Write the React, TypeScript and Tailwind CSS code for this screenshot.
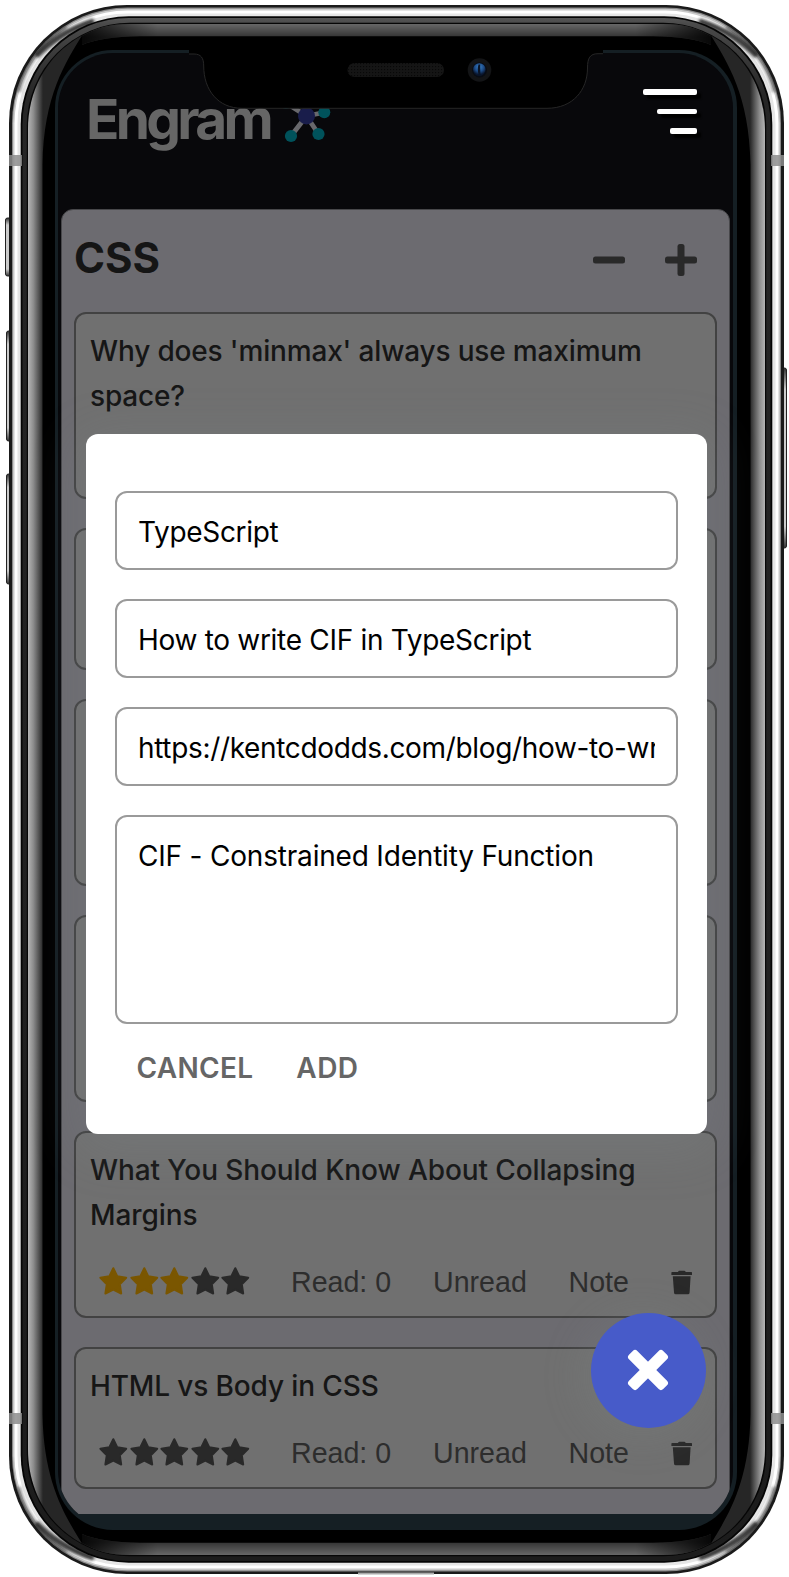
import React from "react";

type Item = { title: string[]; tracking: string; rating: number };

const covered = ["h-[141.7px]", "h-[186.7px]", "h-[186.7px]"];

const items: Item[] = [
  { title: ["What You Should Know About Collapsing", "Margins"], tracking: "tracking-[-0.09px]", rating: 3 },
  { title: ["HTML vs Body in CSS"], tracking: "tracking-[-0.13px]", rating: 0 },
];

const cardClass = "shrink-0 rounded-[12px] border-2 border-[#424242] bg-[#707070] pt-[15px] pl-[14px]";

function Star({ on }: { on: boolean }) {
  return (
    <svg width="30.6" height="30" viewBox="0 0 30.6 30" className={on ? "text-[#7a5600]" : "text-[#292929]"}>
      <path
        d="M15.3 2.2L19.2 10.2L28.2 11.7L21.8 18.2L23.2 27.5L15.3 23.6L7.4 27.5L8.800 18.2L2.4 11.7L11.4 10.2Z"
        fill="currentColor"
        stroke="currentColor"
        strokeWidth="2"
        strokeLinejoin="round"
      />
    </svg>
  );
}

function Trash() {
  return (
    <svg width="22" height="25" viewBox="0 0 22 25" fill="#292929">
      <path d="M7.2 1.600Q7.4 0.7 8.4 0.7H13.2Q14.2 0.7 14.5 1.600L14.6 2H20.4Q21 2 21 2.7V5H0.4V2.7Q0.4 2 1 2H7.1Z" />
      <path d="M1.8 6.2H19.6L18.6 22.4Q18.5 24.3 16.8 24.3H4.8Q3.1 24.3 3 22.4Z" />
    </svg>
  );
}

function CardTitle({ lines, tracking }: { lines: string[]; tracking: string }) {
  return (
    <h2 className={`text-[28px] leading-[45px] font-medium text-[#161616] ${tracking}`}>
      {lines.map((line) => (
        <span key={line} className="block whitespace-nowrap">
          {line}
        </span>
      ))}
    </h2>
  );
}

function Card({ item }: { item: Item }) {
  return (
    <article className={cardClass}>
      <CardTitle lines={item.title} tracking={item.tracking} />
      <div className="flex h-[77.7px] items-center pt-[12px] pl-[8px] font-['Liberation_Sans',Arial,sans-serif] text-[28.6px] whitespace-nowrap text-[#2d2d2d]">
        <div className="mb-[3px] flex w-[193px]">
          {[1, 2, 3, 4, 5].map((n) => (
            <Star key={n} on={n <= item.rating} />
          ))}
        </div>
        <span className="w-[142px]">Read: 0</span>
        <span className="w-[135.5px]">Unread</span>
        <span className="w-[102.5px]">Note</span>
        <Trash />
      </div>
    </article>
  );
}

function SideShine() {
  return (
    <path
      d="M28 130C28 92 45 56 82 35.500C66 62 43.500 95 42.500 165V1414C43.500 1484 66 1517 82 1543.500C45 1523 28 1487 28 1449Z"
      fill="url(#side)"
    />
  );
}

function CornerShade() {
  return (
    <g>
      <path d="M18 92C23 68 38 46 66 26" stroke="#444" strokeOpacity=".5" strokeWidth="6" fill="none" filter="url(#soft)" />
      <path d="M36 56C50 42 66 30 94 21" stroke="#222" strokeOpacity=".85" strokeWidth="6" fill="none" filter="url(#soft)" />
    </g>
  );
}

const shinePath =
  "M82 45Q100 37 140 36.300H653Q693 37 711 45L711 36C696 28 684 24 663 24H130C109 24 97 28 82 36Z";

function Device() {
  return (
    <svg className="absolute inset-0" width="789" height="1577" viewBox="0 0 789 1577" fill="none">
      <defs>
        <linearGradient id="side" x1="28" x2="43" y1="0" y2="0" gradientUnits="userSpaceOnUse">
          <stop offset="0" stopColor="#b4b4b4" />
          <stop offset=".35" stopColor="#8e8e8e" />
          <stop offset="1" stopColor="#262626" />
        </linearGradient>
        <linearGradient id="top" x1="0" x2="0" y1="24" y2="37" gradientUnits="userSpaceOnUse">
          <stop offset="0" stopColor="#676767" />
          <stop offset="1" stopColor="#333" />
        </linearGradient>
        <linearGradient id="fade" x1="82" x2="711" y1="0" y2="0" gradientUnits="userSpaceOnUse">
          <stop offset="0" stopColor="#000" stopOpacity=".85" />
          <stop offset=".12" stopColor="#000" stopOpacity="0" />
          <stop offset=".88" stopColor="#000" stopOpacity="0" />
          <stop offset="1" stopColor="#000" stopOpacity=".85" />
        </linearGradient>
        <linearGradient id="rim" x1="0" x2="0" y1="18" y2="1561" gradientUnits="userSpaceOnUse">
          <stop offset="0" stopColor="#555" />
          <stop offset=".004" stopColor="#4a4a4a" />
          <stop offset=".05" stopColor="#262626" />
          <stop offset="1" stopColor="#1c1c1c" />
        </linearGradient>
        <linearGradient id="key" x1="0" x2="0" y1="0" y2="1">
          <stop offset="0" stopColor="#333" />
          <stop offset=".12" stopColor="#ccc" />
          <stop offset=".88" stopColor="#ccc" />
          <stop offset="1" stopColor="#333" />
        </linearGradient>
        <filter id="soft" x="-20%" y="-20%" width="140%" height="140%">
          <feGaussianBlur stdDeviation="1.6" />
        </filter>
        <clipPath id="body">
          <rect x="11.500" y="7.500" width="770" height="1564" rx="116" />
        </clipPath>
      </defs>

      <rect x="5.500" y="218" width="8" height="58" rx="2" fill="url(#key)" stroke="#222" />
      <rect x="6.500" y="331" width="8" height="110" rx="2" fill="url(#key)" stroke="#222" />
      <rect x="6.500" y="474" width="8" height="110" rx="2" fill="url(#key)" stroke="#222" />
      <rect x="778" y="368" width="8.500" height="180" rx="2" fill="url(#key)" stroke="#222" />

      <rect x="9" y="5" width="775" height="1569" rx="118" fill="#1a1a1a" />
      <rect x="12" y="7.500" width="769" height="1564" rx="115.500" fill="#8a8a8a" />
      <rect x="13" y="8.700" width="767" height="1561.600" rx="114.500" fill="#c9c9c9" />
      <rect x="14.500" y="10.500" width="764" height="1558" rx="113" fill="#fff" />
      <rect x="17.500" y="13.500" width="758" height="1552" rx="110" fill="#e6e6e6" />
      <path d="M358 1573.500H434" stroke="#aaa" strokeWidth="2" />
      <g clipPath="url(#body)">
        <CornerShade />
        <g transform="matrix(-1 0 0 1 793 0)"><CornerShade /></g>
        <g transform="matrix(1 0 0 -1 0 1579)"><CornerShade /></g>
        <g transform="matrix(-1 0 0 -1 793 1579)"><CornerShade /></g>
      </g>
      <rect x="20.700" y="16.300" width="751.600" height="1546.400" rx="108" fill="#050505" />
      <rect x="22.500" y="18" width="748" height="1543" rx="106.500" fill="url(#rim)" />
      <rect x="26.800" y="22.800" width="739.400" height="1533.400" rx="103" fill="#060606" />
      <rect x="28" y="24" width="737" height="1531" rx="102" fill="#000" />
      {["matrix(1 0 0 1 0 0)", "matrix(1 0 0 -1 0 1579)"].map((t) => (
        <g key={t} transform={t}>
          <path d={shinePath} fill="url(#top)" />
          <path d={shinePath} fill="url(#fade)" />
        </g>
      ))}
      <SideShine />
      <g transform="matrix(-1 0 0 1 793 0)"><SideShine /></g>

      {[155, 1413].map((y) => (
        <g key={y} fill="#8d8d8d" fillOpacity=".85">
          <rect x="9" y={y} width="13" height="11" />
          <rect x="771" y={y} width="13" height="11" />
        </g>
      ))}
    </svg>
  );
}

function Notch() {
  return (
    <svg className="absolute top-[49px] left-[180px]" width="432" height="62" viewBox="180 49 432 62" fill="none">
      <defs>
        <pattern id="mesh" width="3" height="3" patternUnits="userSpaceOnUse">
          <rect width="3" height="3" fill="#151515" />
          <rect x="0" y="0" width="1.200" height="1.200" fill="#080808" />
        </pattern>
        <radialGradient id="lens" cx=".5" cy=".3" r=".6">
          <stop offset="0" stopColor="#3b82c9" />
          <stop offset=".6" stopColor="#1c4a85" />
          <stop offset="1" stopColor="#0a1730" />
        </radialGradient>
      </defs>
      <path d="M189 49V54H194C201 54 203.700 58 203.700 66C203.700 90 218 108.300 242 108.300H547C573 108.300 587.500 90 587.500 68C587.500 58 590 53.700 598 53.700H603V49Z" fill="#000" />
      <path d="M189 54H194C201 54 203.700 58 203.700 66C203.700 90 218 108.300 242 108.300H547C573 108.300 587.500 90 587.500 68C587.500 58 590 53.700 598 53.700H603" stroke="#262626" />
      <rect x="347.500" y="63" width="96.500" height="14" rx="7" fill="url(#mesh)" />
      <circle cx="479.500" cy="70" r="11.800" fill="#131416" />
      <circle cx="479.500" cy="70" r="7.500" fill="#080c14" />
      <circle cx="479.300" cy="69.500" r="6.300" fill="url(#lens)" />
      <path d="M478.500 64.500C477.500 68 477.500 71 478.800 75L480.600 75C480.200 71 480.200 68 480.200 64.500Z" fill="#0a1426" />
    </svg>
  );
}

function Header() {
  return (
    <header className="flex h-[156px] justify-between pt-[29px] pr-[36px] pl-[27px]">
      <div className="flex items-start">
        <span className="w-[180px] pl-[1px] text-[55px] leading-[74px] font-bold tracking-[-3.7px] whitespace-nowrap text-[#666]">Engram</span>
        <svg className="mt-[8px] ml-[15px]" width="56" height="60" viewBox="280 90 56 60">
          <g stroke="#68686c" strokeWidth="4.800">
            <path d="M306.500 116L286 103M306.500 116L324 112.500M306.500 116L291 136M306.500 116L318.500 134" />
          </g>
          <g fill="#00525b">
            <circle cx="286" cy="103" r="6" />
            <circle cx="324.300" cy="112.300" r="6" />
            <circle cx="291" cy="136" r="6.100" />
            <circle cx="318.500" cy="134" r="6.100" />
          </g>
          <circle cx="306.500" cy="116" r="8.500" fill="#191d4b" />
        </svg>
      </div>
      <button aria-label="Menu" className="mt-[7px] flex h-[45px] flex-col items-end justify-between self-start">
        <span className="h-[5.700px] w-[54px] rounded-[2px] bg-white shadow-[4px_4px_2px_#000]" />
        <span className="h-[5.700px] w-[40px] rounded-[2px] bg-white shadow-[4px_4px_2px_#000]" />
        <span className="h-[5.700px] w-[27px] rounded-[2px] bg-white shadow-[4px_4px_2px_#000]" />
      </button>
    </header>
  );
}

const inputClass =
  "block w-full rounded-[12px] border-2 border-[#9a9a9a] bg-white px-[21px] text-[28px] leading-[34px] text-black outline-none resize-none";

function Modal() {
  return (
    <form className="absolute top-[433.5px] left-[86px] flex h-[700px] w-[621px] flex-col rounded-[12px] bg-white px-[29px] pt-[57.5px] shadow-[0_10px_50px_8px_rgba(130,142,145,0.2)]">
      <input readOnly value="TypeScript" className={`${inputClass} h-[79px] pt-[2px] tracking-[-0.32px]`} />
      <input readOnly value="How to write CIF in TypeScript" className={`${inputClass} mt-[29px] h-[79px] pt-[2px] tracking-[-0.3px]`} />
      <input readOnly value="https://kentcdodds.com/blog/how-to-write-a-constrained-identity-function-in-typescript" className={`${inputClass} mt-[29px] h-[79px] pt-[2px] tracking-[-0.34px]`} />
      <textarea readOnly value="CIF - Constrained Identity Function" className={`${inputClass} mt-[29px] h-[209px] pt-[22px] tracking-[-0.19px]`} />
      <div className="flex gap-[43px] pt-[27px] pl-[21.5px] text-[28px] leading-[34px] font-semibold text-[#666]">
        <button type="button" className="tracking-[0.3px]">CANCEL</button>
        <button type="button" className="tracking-[0.5px]">ADD</button>
      </div>
    </form>
  );
}

export default function App() {
  return (
    <div className="relative h-[1577px] w-[789px] overflow-hidden bg-white px-[55px] pt-[50px] font-['Inter',sans-serif]">
      <Device />
      <div className="relative h-[1480px] w-[682px] overflow-hidden rounded-[58px] bg-[#151f24] pt-[3px] pl-[3px]">
        <div className="h-[1473px] w-[675px] overflow-hidden rounded-[55px]">
          <div className="h-[1461px] overflow-hidden bg-[#08080b]">
            <Header />
            <main className="mr-[3px] ml-[3px] h-[1320px] rounded-t-[12px] border border-[#47474a] bg-[#6c6b70] px-[12px]">
              <div className="flex h-[102px] items-start justify-between pt-[22px] pr-[19px]">
                <h1 className="text-[42px] leading-[52px] font-bold text-[#151515]">CSS</h1>
                <div className="mt-[11px] flex gap-[38px]">
                  <svg width="34" height="34" viewBox="0 0 34 34" fill="#292929">
                    <rect x="1" y="13.500" width="32" height="7" rx="2.500" />
                  </svg>
                  <svg width="34" height="34" viewBox="0 0 34 34" fill="#292929">
                    <rect x="1" y="13.500" width="32" height="7" rx="2.500" />
                    <rect x="13.500" y="1" width="7" height="32" rx="2.500" />
                  </svg>
                </div>
              </div>
              <div className="flex flex-col gap-[29.3px]">
                <article className={`${cardClass} h-[186.7px]`}>
                  <CardTitle lines={["Why does 'minmax' always use maximum", "space?"]} tracking="tracking-[-0.16px]" />
                </article>
                {covered.map((height, i) => (
                  <article key={i} className={`${cardClass} ${height}`} />
                ))}
                {items.map((item) => (
                  <Card key={item.title[0]} item={item} />
                ))}
              </div>
            </main>
          </div>
        </div>
      </div>
      <Notch />
      <Modal />
      <button aria-label="Close" className="absolute top-[1312.5px] left-[590.5px] flex h-[115.5px] w-[115.5px] items-center justify-center rounded-full bg-[#475bc9] shadow-[-6px_6px_40px_4px_rgba(130,142,140,0.2)]">
        <svg width="50" height="50" viewBox="-25 -25 50 50" fill="#fff">
          <g transform="rotate(45)">
            <rect x="-24.200" y="-5.900" width="48.400" height="11.800" rx="3.200" />
            <rect x="-5.900" y="-24.200" width="11.800" height="48.400" rx="3.200" />
          </g>
        </svg>
      </button>
    </div>
  );
}
